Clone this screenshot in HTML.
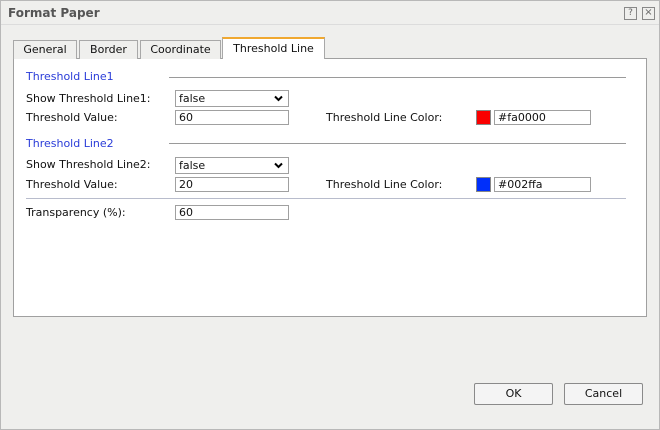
<!DOCTYPE html><html><head><style>
body{margin:0;width:660px;height:430px;background:#fff;font-family:"DejaVu Sans","Liberation Sans",sans-serif;font-size:11px;color:#111}
.a{position:absolute}
#dlg{position:absolute;left:0;top:0;width:658px;height:428px;border:1px solid #b8b8b8;background:#efefed}
.tab{position:absolute;top:39px;height:19px;border:1px solid #a8a8a8;border-bottom:none;background:#efefed;text-align:center;line-height:18px;box-sizing:border-box}
.in{position:absolute;height:15px;border:1px solid #a0a0a0;background:#fff;box-sizing:border-box;line-height:13px;padding-left:3px}
.blue{color:#2a3cd8}
.hl{position:absolute;height:1px;background:#9a9a9a}
.btn{position:absolute;top:382px;width:79px;height:22px;border:1px solid #8a8a8a;border-radius:2px;background:#f4f4f4;text-align:center;line-height:20px;box-sizing:border-box}
</style></head><body>
<div id="dlg">
<div class="a" style="left:7px;top:5px;font-weight:bold;color:#555;font-size:12px">Format Paper</div>
<div class="a" style="left:0;top:23px;width:658px;height:1px;background:#dcdcdc"></div>
<div class="a" style="left:623px;top:6px;width:11px;height:11px;border:1px solid #888;font-size:9px;line-height:11px;text-align:center;color:#666">?</div>
<div class="a" style="left:641px;top:6px;width:11px;height:11px;border:1px solid #888;font-size:10px;line-height:10px;text-align:center;color:#666">×</div>
<div class="a" style="left:12px;top:57px;width:632px;height:257px;border:1px solid #a0a0a0;background:#fff"></div>
<div class="tab" style="left:12px;width:64px">General</div>
<div class="tab" style="left:78px;width:59px">Border</div>
<div class="tab" style="left:139px;width:81px">Coordinate</div>
<div class="tab" style="left:221px;top:36px;width:103px;height:22px;background:#fff;border-top:2px solid #f0a830;line-height:19px">Threshold Line</div>
<div class="a blue" style="left:25px;top:69px">Threshold Line1</div>
<div class="hl" style="left:168px;top:76px;width:457px"></div>
<div class="a" style="left:25px;top:91px">Show Threshold Line1:</div>
<div class="in" style="left:174px;top:89px;width:114px;height:17px;line-height:15px">false<svg style="position:absolute;right:5px;top:4px" width="9" height="7"><path d="M1 1.5L4.5 5L8 1.5" stroke="#000" stroke-width="2" fill="none"/></svg></div>
<div class="a" style="left:25px;top:110px">Threshold Value:</div>
<div class="in" style="left:174px;top:109px;width:114px">60</div>
<div class="a" style="left:325px;top:110px">Threshold Line Color:</div>
<div class="a" style="left:475px;top:109px;width:13px;height:13px;border:1px solid #888;background:#fa0000"></div>
<div class="in" style="left:493px;top:109px;width:97px">#fa0000</div>
<div class="a blue" style="left:25px;top:136px">Threshold Line2</div>
<div class="hl" style="left:168px;top:142px;width:457px"></div>
<div class="a" style="left:25px;top:157px">Show Threshold Line2:</div>
<div class="in" style="left:174px;top:156px;width:114px;height:17px;line-height:15px">false<svg style="position:absolute;right:5px;top:4px" width="9" height="7"><path d="M1 1.5L4.5 5L8 1.5" stroke="#000" stroke-width="2" fill="none"/></svg></div>
<div class="a" style="left:25px;top:177px">Threshold Value:</div>
<div class="in" style="left:174px;top:176px;width:114px">20</div>
<div class="a" style="left:325px;top:177px">Threshold Line Color:</div>
<div class="a" style="left:475px;top:176px;width:13px;height:13px;border:1px solid #888;background:#002ffa"></div>
<div class="in" style="left:493px;top:176px;width:97px">#002ffa</div>
<div class="hl" style="left:25px;top:197px;width:600px;background:#b8bccc"></div>
<div class="a" style="left:25px;top:205px">Transparency (%):</div>
<div class="in" style="left:174px;top:204px;width:114px">60</div>
<div class="btn" style="left:473px">OK</div>
<div class="btn" style="left:563px">Cancel</div>
</div>
</body></html>
